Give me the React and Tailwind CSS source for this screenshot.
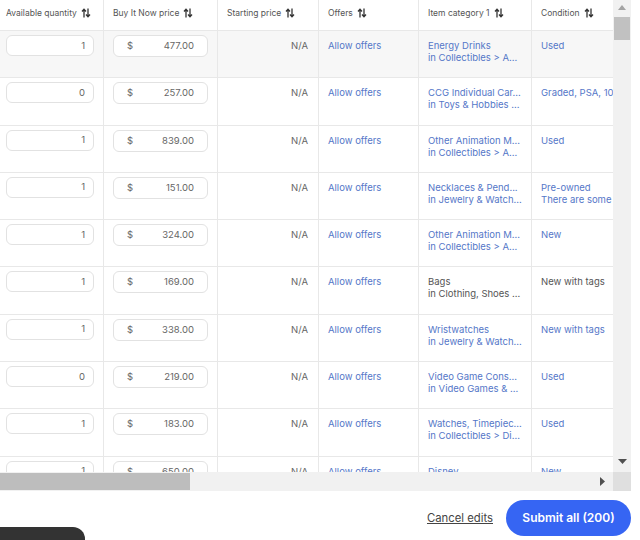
import React from 'react';

const rows = [
    { qty: '1', price: '477.00', cat: ['Energy Drinks', 'in Collectibles > A...'], cond: ['Used'], hover: true },
    { qty: '0', price: '257.00', cat: ['CCG Individual Car...', 'in Toys & Hobbies ...'], cond: ['Graded, PSA, 10'] },
    { qty: '1', price: '839.00', cat: ['Other Animation M...', 'in Collectibles > A...'], cond: ['Used'] },
    { qty: '1', price: '151.00', cat: ['Necklaces & Pend...', 'in Jewelry & Watch...'], cond: ['Pre-owned', 'There are some'] },
    { qty: '1', price: '324.00', cat: ['Other Animation M...', 'in Collectibles > A...'], cond: ['New'] },
    { qty: '1', price: '169.00', cat: ['Bags', 'in Clothing, Shoes ...'], cond: ['New with tags'], plain: true },
    { qty: '1', price: '338.00', cat: ['Wristwatches', 'in Jewelry & Watch...'], cond: ['New with tags'] },
    { qty: '0', price: '219.00', cat: ['Video Game Cons...', 'in Video Games & ...'], cond: ['Used'] },
    { qty: '1', price: '183.00', cat: ['Watches, Timepiec...', 'in Collectibles > Di...'], cond: ['Used'] },
    { qty: '1', price: '650.00', cat: ['Disney', ''], cond: ['New'] },
];

const cols = 'grid grid-cols-[104px_114px_101px_100px_113px_100px] w-[632px]';

const SortIcon = () => (
    <svg width="10" height="10" viewBox="0 0 10 10" className="ml-[4px] shrink-0 text-[#333]" fill="none" stroke="currentColor" strokeWidth="1.3">
        <path d="M3 9.5V1.5M1 3.5L3 1.2L5 3.5" />
        <path d="M7 .5V8.5M5 6.5L7 8.8L9 6.5" />
    </svg>
);

const Header = ({ label, className = '' }) => (
    <div className={`flex items-center h-[30px] pb-[4px] border-r border-[#e8e8e8] text-[8.5px] text-[#555] ${className}`}>
        {label}
        <SortIcon />
    </div>
);

const Cell = ({ children, className = '' }) => (
    <div className={`border-r border-[#e8e8e8] h-full overflow-hidden whitespace-nowrap ${className}`}>{children}</div>
);

const Row = ({ row }) => {
    const bg = row.hover ? 'bg-[#f7f7f7]' : 'bg-white';
    const catColor = row.plain ? 'text-[#555]' : 'text-[#5577c8]';
    return (
        <div className={`${cols} h-[47.3px] border-t border-[#e8e8e8] text-[9.5px] leading-[12px] ${bg}`}>
            <Cell className="pl-[6px] pt-[4px]">
                <div className="w-[88px] h-[21px] rounded-[6px] border border-[#e2e2e2] bg-white flex items-center justify-end pr-[8px] text-[#666]">{row.qty}</div>
            </Cell>
            <Cell className="pl-[9px] pt-[4px]">
                <div className="w-[95px] h-[22px] rounded-[6px] border border-[#e2e2e2] bg-white flex items-center justify-between px-[13px] text-[#666]">
                    <span>$</span>
                    <span>{row.price}</span>
                </div>
            </Cell>
            <Cell className="pt-[9px] pr-[10px] text-right text-[#666]">N/A</Cell>
            <Cell className="pl-[9px] pt-[9px] text-[#5577c8]">Allow offers</Cell>
            <Cell className={`pl-[9px] pt-[9px] ${catColor}`}>
                <div>{row.cat[0]}</div>
                <div>{row.cat[1]}</div>
            </Cell>
            <div className={`pl-[9px] pt-[9px] overflow-hidden whitespace-nowrap ${catColor}`}>
                {row.cond.map((line) => <div key={line}>{line}</div>)}
            </div>
        </div>
    );
};

export default function App() {
    return (
        <div className="relative w-[640px] h-[540px] bg-white overflow-hidden font-['Inter',sans-serif]">
            <div className="flex w-[631px] h-[491px]">
                <div className="w-[613px] flex flex-col">
                    <div className="h-[472px] overflow-hidden">
                        <div className={cols}>
                            <Header label="Available quantity" className="pl-[6px]" />
                            <Header label="Buy It Now price" className="pl-[9px]" />
                            <Header label="Starting price" className="pl-[9px]" />
                            <Header label="Offers" className="pl-[9px]" />
                            <Header label="Item category 1" className="pl-[9px]" />
                            <Header label="Condition" className="pl-[9px] border-r-0" />
                        </div>
                        {rows.map((row, i) => <Row key={i} row={row} />)}
                    </div>
                    {/* horizontal scrollbar */}
                    <div className="relative h-[19px] bg-[#f1f1f1] flex">
                        <div className="w-[190px] h-[17px] mt-px bg-[#bdbdbd]" />
                        <svg width="5" height="9" viewBox="0 0 5 9" className="absolute right-[8px] top-[5px] text-[#505050]" fill="currentColor">
                            <path d="M0 0L5 4.5L0 9Z" />
                        </svg>
                    </div>
                </div>
                {/* vertical scrollbar */}
                <div className="w-[18px] h-full bg-[#f1f1f1] flex flex-col items-center">
                    <svg width="8" height="5" viewBox="0 0 8 5" className="mt-[5px] text-[#a3a3a3]" fill="currentColor">
                        <path d="M0 5L4 0L8 5Z" />
                    </svg>
                    <div className="w-[16px] h-[23px] mt-[7px] bg-[#c1c1c1]" />
                    <svg width="9" height="5" viewBox="0 0 9 5" className="mt-auto mb-[8px] text-[#505050]" fill="currentColor">
                        <path d="M0 0L4.5 5L9 0Z" />
                    </svg>
                    <div className="w-full h-[19px] bg-[#dfdfdf]" />
                </div>
            </div>
            {/* footer */}
            <div className="flex items-center justify-end gap-[13px] w-[631px] mt-[9px]">
                <a className="text-[11.3px] text-[#444] underline">Cancel edits</a>
                <button className="w-[125px] h-[36px] rounded-full bg-[#3665f3] text-white text-[12px] font-semibold">Submit all (200)</button>
            </div>
            <div className="absolute left-0 bottom-0 w-[85px] h-[13px] bg-[#333] rounded-tr-[12px]" />
        </div>
    );
}
